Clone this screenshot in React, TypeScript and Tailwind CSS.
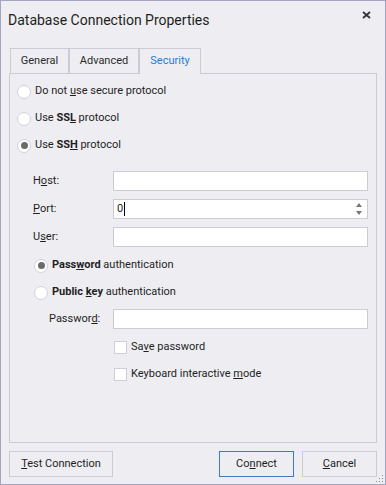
import type { ReactNode } from 'react'

const font = { fontFamily: '"Segoe UI", Roboto, sans-serif' }

function Radio({ checked, children }: { checked?: boolean; children: ReactNode }) {
  return (
    <div className="flex items-center h-[27px]">
      <span className="w-[14px] h-[14px] rounded-full border border-[#d2d2dc] bg-white flex items-center justify-center">
        {checked && <span className="w-[7px] h-[7px] rounded-full bg-[#6b6b6b]" />}
      </span>
      <span className="ml-[4px]">{children}</span>
    </div>
  )
}

function Check({ children }: { children: ReactNode }) {
  return (
    <div className="flex items-center h-[27px] pl-[104px]">
      <span className="w-[13px] h-[13px] border border-[#cfcfd9] bg-white" />
      <span className="ml-[4px]">{children}</span>
    </div>
  )
}

function Field({ label, pl, children }: { label: ReactNode; pl: string; children?: ReactNode }) {
  return (
    <div className="flex items-center h-[20px]">
      <div className={`w-[103px] ${pl}`}>{label}</div>
      <div className="flex-1 h-[20px] border border-[#cbcbd8] bg-white relative flex items-center">{children}</div>
    </div>
  )
}

export default function App() {
  return (
    <div
      className="relative w-[386px] h-[485px] border border-[#a3a3c2] bg-[#eeeef2] flex flex-col text-[11px] text-[#1e1e1e]"
      style={font}
    >
      <div className="h-[47px] flex justify-between items-start">
        <div className="pl-[7px] pt-[9px] text-[14px] leading-[20px] text-[#1e1e1e]">Database Connection Properties</div>
        <svg width="9" height="8" viewBox="0 0 9 8" className="mt-[10px] mr-[14px]">
          <path d="M1 1 L8 7 M8 1 L1 7" stroke="#333" strokeWidth="1.8" />
        </svg>
      </div>

      <div className="flex pl-[9px] -mb-px">
        <div className="w-[59px] h-[26px] border border-b-0 border-[#cbcbd8] flex items-center justify-center text-[#2b2b2b]">General</div>
        <div className="w-[70px] h-[26px] border border-b-0 border-[#cbcbd8] flex items-center justify-center text-[#2b2b2b]">Advanced</div>
        <div className="relative z-10 w-[62px] h-[26px] border border-b-0 border-[#cbcbd8] bg-[#eeeef2] flex items-center justify-center text-[#1c7cd6]">Security</div>
      </div>

      <div className="mx-[8px] h-[370px] border border-[#cbcbd8] flex flex-col pt-[4px] pr-[8px]">
        <div className="pl-[7px]">
          <Radio>Do not <u>u</u>se secure protocol</Radio>
          <Radio>Use <b>SS<u>L</u></b> protocol</Radio>
          <Radio checked>Use <b>SS<u>H</u></b> protocol</Radio>
        </div>

        <div className="mt-[12px] flex flex-col gap-[8px]">
          <Field label={<>H<u>o</u>st:</>} pl="pl-[23px]" />
          <Field label={<><u>P</u>ort:</>} pl="pl-[23px]">
            <span className="pl-[3px]">0</span>
            <span className="w-px h-[14px] bg-black ml-[1px]" />
            <svg width="8" height="14" viewBox="0 0 8 14" className="absolute right-[4px] top-[2px]">
              <path d="M4 1 L7 5 L1 5 Z" fill="#777" />
              <path d="M1 9 L7 9 L4 13 Z" fill="#777" />
            </svg>
          </Field>
          <Field label={<>U<u>s</u>er:</>} pl="pl-[23px]" />
        </div>

        <div className="mt-[5px] pl-[24px]">
          <Radio checked><b>Pass<u>w</u>ord</b> authentication</Radio>
          <Radio><b>Public <u>k</u>ey</b> authentication</Radio>
        </div>

        <div className="mt-[3px]">
          <Field label={<>Passwor<u>d</u>:</>} pl="pl-[39px]" />
        </div>

        <div className="mt-[5px]">
          <Check>Sa<u>v</u>e password</Check>
          <Check>Keyboard interactive <u>m</u>ode</Check>
        </div>
      </div>

      <div className="mt-[8px] mx-[8px] flex">
        <button className="w-[104px] h-[26px] border border-[#cbcbd8] bg-[#eeeef2]"><u>T</u>est Connection</button>
        <div className="flex-1" />
        <button className="w-[75px] h-[26px] border border-[#3a7bc8] bg-[#eeeef2]">Co<u>n</u>nect</button>
        <button className="ml-[8px] w-[75px] h-[26px] border border-[#cbcbd8] bg-[#eeeef2]"><u>C</u>ancel</button>
      </div>

      <svg width="8" height="8" viewBox="0 0 8 8" className="absolute right-[1px] bottom-[1px]">
        <rect x="6" y="0" width="1" height="1" fill="#888" />
        <rect x="3" y="3" width="1" height="1" fill="#888" />
        <rect x="6" y="3" width="1" height="1" fill="#888" />
        <rect x="0" y="6" width="1" height="1" fill="#888" />
        <rect x="3" y="6" width="1" height="1" fill="#888" />
        <rect x="6" y="6" width="1" height="1" fill="#888" />
      </svg>
    </div>
  )
}
